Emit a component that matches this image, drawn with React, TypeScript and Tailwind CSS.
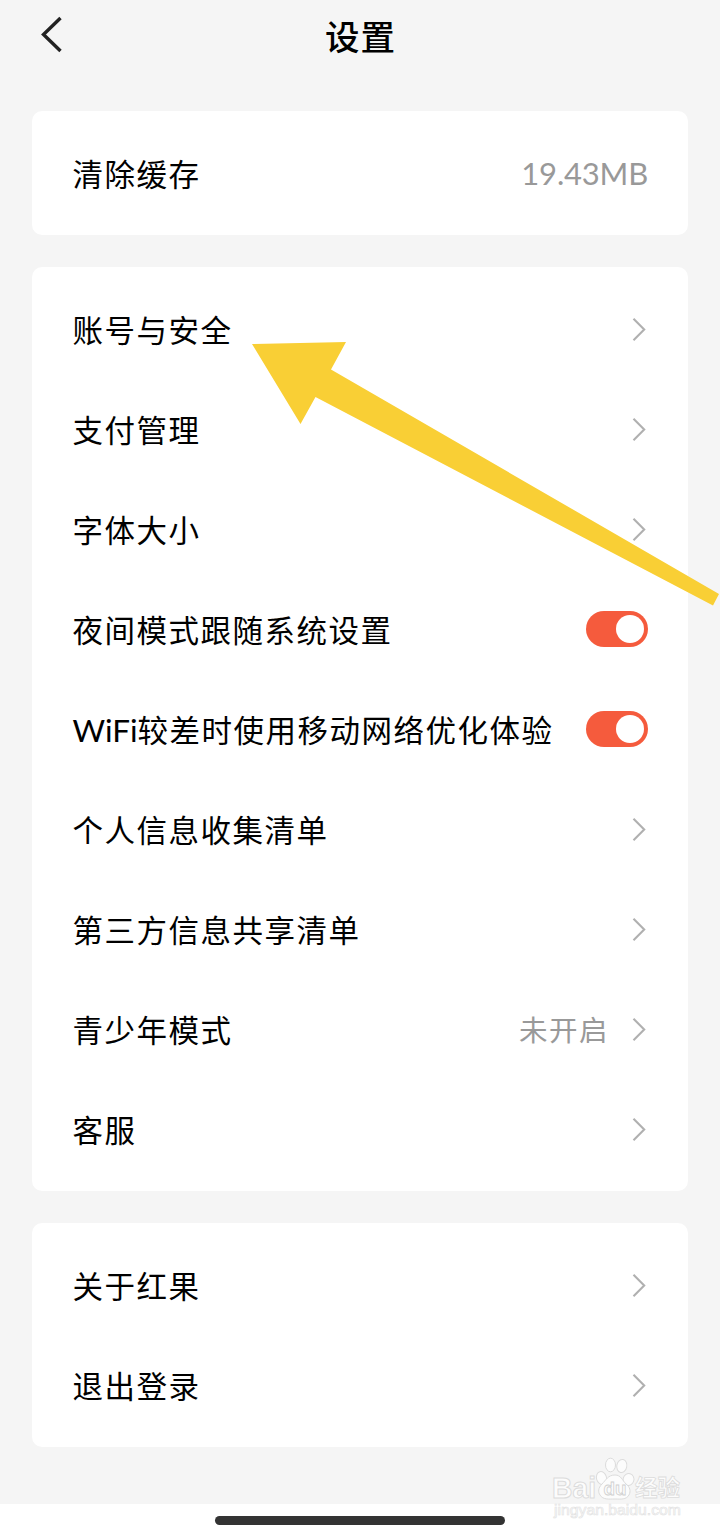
import type { ReactNode } from "react";

function Chevron() {
  return (
    <svg className="block h-6 w-4" viewBox="0 0 16 24" fill="none">
      <path d="M1.5 1.8 L12.2 12.5 L1.5 23.2" stroke="#b0b0b0" strokeWidth="2.1" />
    </svg>
  );
}

function Toggle() {
  return (
    <button
      type="button"
      role="switch"
      aria-checked="true"
      className="flex h-9 w-[62px] items-center justify-end rounded-full bg-[#f55b3d] pr-1"
    >
      <span className="size-7 rounded-full bg-white" />
    </button>
  );
}

function Row({ label, children }: { label: ReactNode; children?: ReactNode }) {
  return (
    <div className="flex h-[100px] items-center justify-between pr-10 pl-[40.4px]">
      <span className="pt-0.5 text-[30.5px] leading-10 tracking-[1.5px] whitespace-nowrap text-black">
        {label}
      </span>
      <div className="flex items-center">{children}</div>
    </div>
  );
}

function Card({ children }: { children: ReactNode }) {
  return <section className="rounded-[10px] bg-white py-3">{children}</section>;
}

function Watermark() {
  return (
    <svg
      className="absolute top-[1454px] left-[548px]"
      width="140"
      height="70"
      viewBox="0 0 140 70"
      fill="#fcfcfc"
      stroke="#dcdcdc"
      strokeWidth="1"
    >
      <text x="4" y="44" fontFamily="Liberation Sans, sans-serif" fontWeight="700" fontSize="29" textLength="44" lengthAdjust="spacingAndGlyphs">
        Bai
      </text>
      <ellipse cx="53.5" cy="24" rx="5" ry="6.5" transform="rotate(-15 53.5 24)" />
      <ellipse cx="62.5" cy="11" rx="5" ry="6.8" />
      <ellipse cx="73.8" cy="12" rx="5" ry="6.6" transform="rotate(12 73.8 12)" />
      <ellipse cx="80.5" cy="25.5" rx="5.4" ry="6" transform="rotate(15 80.5 25.5)" />
      <path d="M67 21 C60 21 58 26 54 30 C50 34 50 38 52 41 C55 46 61 45 67 45 C73 45 78 46 81 41 C83 37 82 33 78 30 C74 26 73 21 67 21 Z" />
      <text x="55.5" y="41" fontFamily="Liberation Sans, sans-serif" fontWeight="700" fontSize="19" textLength="23" lengthAdjust="spacingAndGlyphs" stroke="#d0d0d0" strokeWidth="0.8">
        du
      </text>
      <text x="87" y="42" fontFamily="Noto Sans CJK SC, sans-serif" fontWeight="700" fontSize="22.5" textLength="45" strokeWidth="0.8">
        经验
      </text>
      <text x="6" y="61" fontFamily="Liberation Sans, sans-serif" fontSize="15" textLength="127" lengthAdjust="spacingAndGlyphs" strokeWidth="0.6" stroke="#e2e2e2">
        jingyan.baidu.com
      </text>
    </svg>
  );
}

export default function App() {
  return (
    <div className="relative flex h-[1536px] w-[720px] flex-col overflow-hidden bg-[#f5f5f5] font-['Lato','Noto_Sans_CJK_SC',sans-serif]">
      <header className="grid h-[111px] shrink-0 grid-cols-3 items-start">
        <button type="button" aria-label="返回" className="mt-4 ml-10 w-6">
          <svg width="24" height="38" viewBox="0 0 24 38" fill="none">
            <path d="M20.5 2 L3.5 18.5 L20.5 35" stroke="#222222" strokeWidth="3.4" />
          </svg>
        </button>
        <h1 className="mt-3 pl-px text-center text-[34.5px] leading-[50px] font-medium tracking-[1px] text-black">
          设置
        </h1>
      </header>

      <main className="flex flex-1 flex-col gap-8 px-8">
        <Card>
          <Row label="清除缓存">
            <span className="text-[31px] leading-10 tracking-[-0.2px] text-[#999999]">19.43MB</span>
          </Row>
        </Card>

        <Card>
          <Row label="账号与安全"><Chevron /></Row>
          <Row label="支付管理"><Chevron /></Row>
          <Row label="字体大小"><Chevron /></Row>
          <Row label="夜间模式跟随系统设置"><Toggle /></Row>
          <Row label={<><span className="text-[31.5px] tracking-normal">WiFi</span>较差时使用移动网络优化体验</>}>
            <Toggle />
          </Row>
          <Row label="个人信息收集清单"><Chevron /></Row>
          <Row label="第三方信息共享清单"><Chevron /></Row>
          <Row label="青少年模式">
            <span className="mr-[23px] pt-0.5 text-[28.5px] leading-10 tracking-[1.5px] text-[#999999]">未开启</span>
            <Chevron />
          </Row>
          <Row label="客服"><Chevron /></Row>
        </Card>

        <Card>
          <Row label="关于红果"><Chevron /></Row>
          <Row label="退出登录"><Chevron /></Row>
        </Card>
      </main>

      <footer className="flex h-8 shrink-0 justify-center bg-white pt-3">
        <div className="h-[9px] w-[290px] rounded-full bg-[#333333]" />
      </footer>

      <svg className="pointer-events-none absolute top-[340px] left-[250px]" width="470" height="270" viewBox="250 340 470 270">
        <path d="M252 344 L346 342 L331 369.5 L719 594 L713 605.5 L315.5 397 L300.5 424 Z" fill="#f9cf35" />
      </svg>
      <Watermark />
    </div>
  );
}
